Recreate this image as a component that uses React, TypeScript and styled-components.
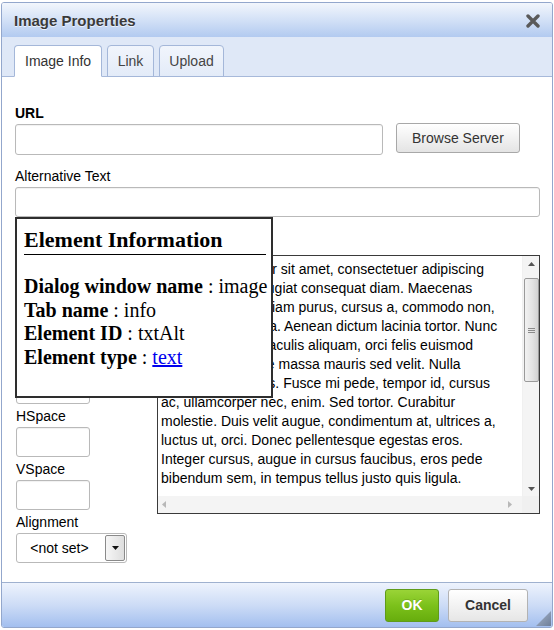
import React from "react";
import styled, { createGlobalStyle } from "styled-components";

const GlobalStyle = createGlobalStyle`
  html, body { margin: 0; padding: 0; background: #ffffff; }
  body { font-family: "Liberation Sans", Arial, sans-serif; font-size: 14px; color: #000; }
  * { box-sizing: border-box; }
`;

const Dialog = styled.div`
  position: relative;
  margin: 2px 0 0 1px;
  width: 552px;
  height: 626px;
  border: 1px solid #93a7cc;
  border-radius: 3px;
  display: flex;
  flex-direction: column;
  overflow: hidden;
  background: #fff;
`;

const TitleBar = styled.div`
  height: 34px;
  flex: none;
  display: flex;
  align-items: center;
  justify-content: space-between;
  padding: 0 12px 0 12px;
  background: linear-gradient(to bottom, #f2f6fc 0%, #d6e3f7 45%, #b2caf0 100%);
`;

const Title = styled.div`
  font-size: 15px;
  font-weight: bold;
  color: #3a3a3a;
  text-shadow: 0 1px 0 rgba(255, 255, 255, 0.7);
  padding-top: 1px;
`;

const CloseButton = styled.div`
  width: 14px;
  height: 14px;
  display: flex;
  margin-top: 2px;
`;

const TabStrip = styled.div`
  height: 40px;
  flex: none;
  display: flex;
  align-items: flex-end;
  gap: 5px;
  padding: 0 0 0 12px;
  background: #dfe8f7;
  border-bottom: 1px solid #a7b9da;
`;

const Tab = styled.div<{ $active?: boolean }>`
  height: 32px;
  margin-bottom: -1px;
  display: flex;
  align-items: center;
  font-size: 14px;
  color: ${(p) => (p.$active ? "#333" : "#444")};
  background: ${(p) => (p.$active ? "#ffffff" : "linear-gradient(to bottom, #f1f5fc, #e3ebf8)")};
  border: 1px solid #a4b7d9;
  border-bottom-color: ${(p) => (p.$active ? "#ffffff" : "#a4b7d9")};
  border-radius: 4px 4px 0 0;
  padding: 0 ${(p) => (p.$active ? "10px" : "9.5px")};
`;

const Content = styled.div`
  position: relative;
  flex: 1;
  padding: 28px 12px 0 13px;
  background: #fff;
`;

const Label = styled.div<{ $bold?: boolean }>`
  font-size: 14px;
  line-height: 16px;
  height: 16px;
  font-weight: ${(p) => (p.$bold ? "bold" : "normal")};
  color: #000;
`;

const TextInput = styled.div<{ $width: number; $height?: number }>`
  width: ${(p) => p.$width}px;
  height: ${(p) => p.$height ?? 30}px;
  flex: none;
  border: 1px solid #b9b9b9;
  border-radius: 3px;
  background: #fff;
  box-shadow: inset 0 1px 1px rgba(0, 0, 0, 0.06);
`;

const UrlRow = styled.div`
  display: flex;
  align-items: flex-end;
  gap: 13px;
`;

const FieldStack = styled.div<{ $gap?: number }>`
  display: flex;
  flex-direction: column;
  gap: ${(p) => p.$gap ?? 3}px;
`;

const GrayButton = styled.div`
  height: 30px;
  margin-bottom: 2px;
  padding: 0 15px;
  display: flex;
  align-items: center;
  font-size: 14px;
  color: #333;
  border: 1px solid #a8a8a8;
  border-radius: 3px;
  background: linear-gradient(to bottom, #ffffff, #e4e4e4);
  box-shadow: 0 1px 0 rgba(255, 255, 255, 0.6) inset;
`;

const AltBlock = styled(FieldStack)`
  margin-top: 13px;
`;

const Lower = styled.div`
  display: flex;
  margin-top: 32px;
`;

const LeftColumn = styled.div`
  width: 142px;
  flex: none;
  padding-left: 1px;
  padding-top: 125px;
  display: flex;
  flex-direction: column;
  gap: 4px;
`;

const SmallField = styled.div`
  display: flex;
  flex-direction: column;
  gap: 2px;
`;

const SmallLabel = styled.div`
  font-size: 14px;
  line-height: 17px;
  height: 17px;
  color: #000;
`;

const Select = styled.div`
  width: 111px;
  height: 30px;
  display: flex;
  border: 1px solid #b9b9b9;
  border-radius: 3px;
  background: #fff;
  overflow: hidden;
`;

const SelectValue = styled.div`
  flex: 1;
  display: flex;
  align-items: center;
  justify-content: center;
  font-size: 14px;
  color: #000;
  padding-right: 2px;
`;

const SelectArrow = styled.div`
  width: 20px;
  margin: 1px;
  border: 1px solid #8a8a8a;
  border-radius: 2px;
  display: flex;
  align-items: center;
  justify-content: center;
  background: linear-gradient(to right, #f6f6f6, #dedede);
`;

const Preview = styled.div`
  margin-top: 6px;
  width: 383px;
  height: 259px;
  border: 1px solid #3a3a3a;
  display: grid;
  grid-template-columns: 1fr 17px;
  grid-template-rows: 1fr 17px;
  background: #fff;
`;

const PreviewText = styled.div`
  overflow: hidden;
  padding: 4px 0 0 3px;
  font-size: 14px;
  line-height: 19px;
  color: #000;
  white-space: nowrap;
`;

const VScroll = styled.div`
  background: #f4f4f4;
  border-left: 1px solid #f0f0f0;
  display: flex;
  flex-direction: column;
  align-items: center;
`;

const HScroll = styled.div`
  background: #f4f4f4;
  display: flex;
  align-items: center;
  justify-content: space-between;
  padding: 0 10px 0 4px;
`;

const Corner = styled.div`
  background: #f0f0f0;
`;

const ArrowBox = styled.div<{ $h?: number }>`
  height: ${(p) => p.$h ?? 17}px;
  width: 17px;
  display: flex;
  align-items: center;
  justify-content: center;
  flex: none;
`;

const Thumb = styled.div`
  margin-top: 7px;
  width: 15px;
  height: 104px;
  border: 1px solid #9a9a9a;
  border-radius: 2px;
  background: linear-gradient(to right, #f2f2f2, #e2e2e2 60%, #d2d2d2);
  display: flex;
  align-items: center;
  justify-content: center;
`;

const Spacer = styled.div`
  flex: 1;
`;

const InfoPopup = styled.div`
  position: absolute;
  left: 13px;
  top: 140px;
  width: 258px;
  height: 181px;
  border: 2px solid #2e2e2e;
  background: #fff;
  padding: 7px 5px 0 7px;
  font-family: "Liberation Serif", "Times New Roman", serif;
  color: #000;
  z-index: 2;
`;

const InfoTitle = styled.div`
  font-size: 22px;
  font-weight: bold;
  line-height: 27px;
  padding-bottom: 1px;
  border-bottom: 1px solid #000;
`;

const InfoBody = styled.div`
  margin-top: 20px;
  font-size: 20px;
  line-height: 23.7px;
  white-space: nowrap;
`;

const InfoKey = styled.b`
  font-weight: bold;
`;

const InfoLink = styled.a`
  color: #0000ee;
  text-decoration: underline;
`;

const Footer = styled.div`
  height: 45px;
  flex: none;
  border-top: 1px solid #9fb1cf;
  background: linear-gradient(to bottom, #eef3fd 0%, #cddcf6 50%, #a3bfef 100%);
  display: flex;
  align-items: center;
  justify-content: flex-end;
  gap: 9px;
  padding: 0 24px 0 0;
`;

const OkButton = styled.div`
  width: 54px;
  height: 33px;
  display: flex;
  align-items: center;
  justify-content: center;
  font-weight: bold;
  font-size: 14px;
  color: #fff;
  border: 1px solid #5f9b1a;
  border-radius: 3px;
  background: linear-gradient(to bottom, #9ad437 0%, #7cc11b 50%, #67ad0d 100%);
  text-shadow: 0 -1px 0 rgba(0, 0, 0, 0.15);
`;

const CancelButton = styled.div`
  width: 80px;
  height: 33px;
  display: flex;
  align-items: center;
  justify-content: center;
  font-weight: bold;
  font-size: 14px;
  color: #333;
  border: 1px solid #b3b3b3;
  border-radius: 3px;
  background: linear-gradient(to bottom, #ffffff, #e6e6e6);
`;

const Grip = styled.div`
  position: absolute;
  right: 1px;
  bottom: 1px;
  width: 15px;
  height: 15px;
  display: flex;
`;

const lines = [
  "Lorem ipsum dolor sit amet, consectetuer adipiscing",
  "elit. Maecenas feugiat consequat diam. Maecenas",
  "metus. Vivamus diam purus, cursus a, commodo non,",
  "facilisis vitae, nulla. Aenean dictum lacinia tortor. Nunc",
  "iaculis, nibh non iaculis aliquam, orci felis euismod",
  "neque, sed ornare massa mauris sed velit. Nulla",
  "pretium mi et risus. Fusce mi pede, tempor id, cursus",
  "ac, ullamcorper nec, enim. Sed tortor. Curabitur",
  "molestie. Duis velit augue, condimentum at, ultrices a,",
  "luctus ut, orci. Donec pellentesque egestas eros.",
  "Integer cursus, augue in cursus faucibus, eros pede",
  "bibendum sem, in tempus tellus justo quis ligula.",
];

const Tri = ({ dir, color }: { dir: "up" | "down" | "left" | "right"; color: string }) => {
  const pts = {
    up: "0,4 3.5,0 7,4",
    down: "0,0 7,0 3.5,4",
    left: "4,0 4,7 0,3.5",
    right: "0,0 0,7 4,3.5",
  }[dir];
  const vertical = dir === "up" || dir === "down";
  return (
    <svg width={vertical ? 7 : 4} height={vertical ? 4 : 7} viewBox={vertical ? "0 0 7 4" : "0 0 4 7"}>
      <polygon points={pts} fill={color} />
    </svg>
  );
};

export default function App() {
  return (
    <>
      <GlobalStyle />
      <Dialog>
        <TitleBar>
          <Title>Image Properties</Title>
          <CloseButton>
            <svg width="14" height="14" viewBox="0 0 14 14">
              <path d="M2 2 L12 12 M12 2 L2 12" stroke="#5a5a5a" strokeWidth="3.4" strokeLinecap="round" />
            </svg>
          </CloseButton>
        </TitleBar>
        <TabStrip>
          <Tab $active>Image Info</Tab>
          <Tab>Link</Tab>
          <Tab>Upload</Tab>
        </TabStrip>
        <Content>
          <UrlRow>
            <FieldStack>
              <Label $bold>URL</Label>
              <TextInput $width={368} $height={31} />
            </FieldStack>
            <GrayButton>Browse Server</GrayButton>
          </UrlRow>
          <AltBlock>
            <Label>Alternative Text</Label>
            <TextInput $width={525} />
          </AltBlock>
          <Lower>
            <LeftColumn>
              <TextInput $width={74} />
              <SmallField>
                <SmallLabel>HSpace</SmallLabel>
                <TextInput $width={74} />
              </SmallField>
              <SmallField>
                <SmallLabel>VSpace</SmallLabel>
                <TextInput $width={74} />
              </SmallField>
              <SmallField>
                <SmallLabel>Alignment</SmallLabel>
                <Select>
                  <SelectValue>&lt;not set&gt;</SelectValue>
                  <SelectArrow>
                    <Tri dir="down" color="#111" />
                  </SelectArrow>
                </Select>
              </SmallField>
            </LeftColumn>
            <Preview>
              <PreviewText>
                {lines.map((l, i) => (
                  <div key={i}>{l}</div>
                ))}
              </PreviewText>
              <VScroll>
                <ArrowBox $h={15}>
                  <Tri dir="up" color="#555" />
                </ArrowBox>
                <Thumb>
                  <svg width="7" height="7" viewBox="0 0 7 7">
                    <path d="M0 1.5 H7 M0 3.5 H7 M0 5.5 H7" stroke="#8a8a8a" strokeWidth="1" />
                  </svg>
                </Thumb>
                <Spacer />
                <ArrowBox $h={15}>
                  <Tri dir="down" color="#555" />
                </ArrowBox>
              </VScroll>
              <HScroll>
                <Tri dir="left" color="#b8b8b8" />
                <Tri dir="right" color="#b8b8b8" />
              </HScroll>
              <Corner />
            </Preview>
          </Lower>
          <InfoPopup>
            <InfoTitle>Element Information</InfoTitle>
            <InfoBody>
              <div>
                <InfoKey>Dialog window name</InfoKey> : image
              </div>
              <div>
                <InfoKey>Tab name</InfoKey> : info
              </div>
              <div>
                <InfoKey>Element ID</InfoKey> : txtAlt
              </div>
              <div>
                <InfoKey>Element type</InfoKey> : <InfoLink href="#">text</InfoLink>
              </div>
            </InfoBody>
          </InfoPopup>
        </Content>
        <Footer>
          <OkButton>OK</OkButton>
          <CancelButton>Cancel</CancelButton>
        </Footer>
        <Grip>
          <svg width="15" height="15" viewBox="0 0 15 15">
            <defs>
              <linearGradient id="gripg" x1="0" y1="0" x2="1" y2="1">
                <stop offset="0" stopColor="#a8b6cc" />
                <stop offset="1" stopColor="#6f7f99" />
              </linearGradient>
            </defs>
            <polygon points="15,0 15,15 0,15" fill="url(#gripg)" />
          </svg>
        </Grip>
      </Dialog>
    </>
  );
}
